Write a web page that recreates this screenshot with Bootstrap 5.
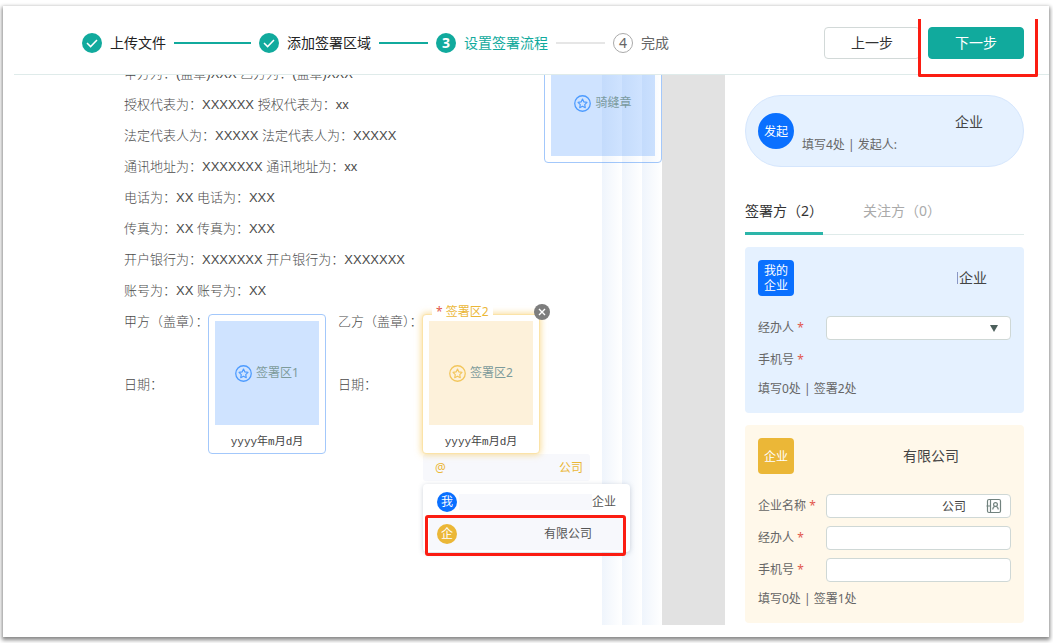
<!DOCTYPE html>
<html lang="zh-CN">
<head>
<meta charset="utf-8">
<meta name="viewport" content="width=device-width, initial-scale=1">
<title>设置签署流程</title>
<link href="https://cdn.jsdelivr.net/npm/bootstrap@5.3.0/dist/css/bootstrap.min.css" rel="stylesheet">
<style>
  :root { --teal: #11aa9d; --blue: #0a70ff; --gold: #ebb737; --mark-red: #fb1d12; --soft: #f7f8fc; }
  body { font: 12px/18px "Noto Sans", "Noto Sans CJK SC", sans-serif; color: #666; background: #fff; }
  .frame { margin: 6px 4px 6px 3px; background: #fff; box-shadow: 0 2px 4px 1px rgba(0,0,0,.48); padding-bottom: 12px; }
  .shell { min-height: 100vh; }
  .bg-own { background: var(--blue); }
  .bg-other { background: var(--gold); }
  /* header */
  .topbar { margin-left: 11px; padding: 5px 25px 0 68px; height: 69px; border-bottom: 1px solid #dfebea; }
  .step { width: 177px; gap: 8px; font-size: 14px; color: #222; white-space: nowrap; }
  .step::after { content: ""; flex: 1; height: 2px; margin-right: 8px; background: var(--teal); }
  .step:last-child::after { display: none; }
  .step.current { color: var(--teal); }
  .step.current::after { background: #e6e6e6; }
  .step.todo { color: #666; }
  .dot { width: 20px; height: 20px; border-radius: 50%; background: var(--teal); color: #fff; font-weight: 700; line-height: 20px; text-align: center; flex: none; }
  .todo .dot { background: #fff; border: 1px solid #aaa; color: #666; font-weight: 400; line-height: 18px; }
  .dot svg { display: block; }
  .act { width: 96px; height: 32px; font-size: 14px; line-height: 18px; border-radius: 4px; padding: 0; }
  .act-prev { background: #fff; border: 1px solid #d2d9d8; color: #333; }
  .act-next, .act-next:hover { background: var(--teal); border: 1px solid var(--teal); color: #fff; }
  .mark-next { position: absolute; inset: -8px -14px -18px -10px; border: 3px solid var(--mark-red); border-top: 0; border-radius: 0 0 2px 2px; pointer-events: none; }
  /* document */
  .viewer { margin-left: 11px; background: #e2e2e2; padding-right: 63px; overflow: hidden; min-width: 0; }
  .sheet { position: relative; background: #fff; overflow: hidden; }
  .contract { margin: -17px 0 0 110px; font: 13px/31px "Liberation Sans", "Noto Sans CJK SC", sans-serif; color: #4a4a4a; font-weight: 300; }
  .contract p { margin: 0; white-space: pre; }
  .party { width: 214px; }
  .folds { position: absolute; inset: 0 0 0 auto; width: 60px; background: repeating-linear-gradient(90deg, rgba(80,140,220,.09) 0, rgba(80,140,220,0) 20px); pointer-events: none; }
  .zone { width: 118px; padding: 6px 6px 0; border: 1px solid #a3c8fb; border-radius: 4px; background: #fff; }
  .zone-face { height: 104px; background: #cfe3ff; color: #7d9b9b; gap: 4px; }
  .zone-date { font: 11px/20px "Liberation Mono", "Noto Sans CJK SC", monospace; color: #444; text-align: center; padding-top: 7px; height: 28px; }
  .zone.gold { border-color: #fbe3a8; box-shadow: 0 0 6px 1px rgba(246,200,90,.6); position: relative; }
  .gold .zone-face { background: #fdf1da; }
  .place { position: absolute; }
  .place-seal { right: 0; top: -32px; padding-bottom: 6px; }
  .place-seal .zone-face { height: 106px; }
  .place-one { left: 194px; top: 239px; }
  .place-two { left: 408px; top: 239px; }
  .zone-tag { position: absolute; left: 9px; top: -12px; background: #fff; color: var(--gold); padding: 0 4px; white-space: nowrap; }
  .need { color: #e2574c; }
  .zone-close { position: absolute; right: -11px; top: -11px; width: 16px; height: 16px; border: 0; padding: 0; border-radius: 50%; background: #7d7d7d; }
  .zone-close svg { display: block; }
  .owner { width: 167px; height: 27px; margin-left: 1px; padding: 0 7px 0 12px; background: var(--soft); color: var(--gold); border-radius: 3px; }
  .menu { width: 207px; margin: 3px 0 0 1px; padding: 2px 6px 0; height: 68px; background: #fff; border-radius: 4px; box-shadow: 0 1px 5px rgba(60,80,110,.25); }
  .menu button { border: 0; width: 100%; height: 32px; padding: 0 8px; background: none; color: #555; position: relative; }
  .menu button.picked { background: var(--soft); padding-right: 32px; }
  .blank { height: 16px; background: var(--soft); margin-left: 2px; }
  .who { width: 20px; height: 20px; border-radius: 50%; line-height: 20px; color: #fff; text-align: center; }
  .mark-pick { position: absolute; inset: -3px -2px -6px -4px; border: 3px solid var(--mark-red); border-radius: 3px; pointer-events: none; }
  /* side panel */
  .side { width: 324px; padding: 20px 25px 0 20px; flex: none; }
  .starter { height: 72px; border: 1px solid #d5e6fd; border-radius: 36px; background: #e5f1ff; padding: 0 12px; gap: 8px; }
  .logo { width: 36px; height: 36px; color: #fff; line-height: 15px; border-radius: 4px; text-align: center; flex: none; }
  .org { font-size: 14px; line-height: 20px; color: #444; }
  .tabs { gap: 40px; margin-top: 30px; border-bottom: 1px solid #dfebea; font-size: 14px; }
  .tabs button { border: 0; background: none; padding: 4px 0 12px; height: 38px; line-height: 20px; color: #aaa; white-space: nowrap; border-bottom: 3px solid transparent; margin-bottom: -1px; }
  .tabs button.active { color: #333; border-bottom-color: #2cb5a9; }
  .signer { background: #e5f1ff; border-radius: 4px; padding: 13px 13px 15px; margin-top: 12px; }
  .signer.outside { background: #fff8ea; }
  .signer .head { margin-bottom: 20px; }
  .line { height: 24px; margin-bottom: 8px; }
  .line label { width: 68px; white-space: nowrap; flex: none; }
  .field { height: 24px; border: 1px solid #cfd8d6; border-radius: 4px; background: #fff; font-size: 12px; line-height: 18px; padding: 0 44px 0 8px; color: #444; flex: 1; min-width: 0; box-shadow: none; text-align: right; }
  .field.pick { appearance: none; background: #fff url("data:image/svg+xml,%3Csvg xmlns='http://www.w3.org/2000/svg' width='8' height='7'%3E%3Cpath d='M0 0h8L4 7z' fill='%234c5f5b'/%3E%3C/svg%3E") no-repeat right 12px center; }
  .book { position: absolute; right: 9px; top: 4px; border: 0; background: none; padding: 0; line-height: 0; }
  .end-24 { margin-right: 24px; } .end-52 { margin-right: 52px; } .end-28 { margin-right: 28px; }
  .caret { border-left: 1px solid #8a97c4; height: 12px; margin-right: 1px; }
</style>
</head>
<body>
<svg class="d-none">
  <symbol id="star" viewBox="0 0 16 16"><circle cx="8" cy="8" r="7.3" fill="none" stroke="currentColor" stroke-width="1.2"/><path d="M8 3.8l1.3 2.7 2.9.4-2.1 2.1.5 2.9L8 10.5l-2.6 1.4.5-2.9-2.1-2.1 2.9-.4z" fill="none" stroke="currentColor" stroke-width="1.1" stroke-linejoin="round"/></symbol>
  <symbol id="tick" viewBox="0 0 20 20"><path d="M5 10l3.6 3.600L15 7" fill="none" stroke="#fff" stroke-width="1.5"/></symbol>
</svg>
<div class="shell d-flex flex-column">
<div class="frame flex-fill d-flex flex-column">
  <header class="topbar d-flex align-items-center">
    <div class="d-flex flex-fill">
      <div class="step d-flex align-items-center"><span class="dot"><svg width="20" height="20"><use href="#tick"/></svg></span>上传文件</div>
      <div class="step d-flex align-items-center"><span class="dot"><svg width="20" height="20"><use href="#tick"/></svg></span>添加签署区域</div>
      <div class="step current d-flex align-items-center"><span class="dot">3</span>设置签署流程</div>
      <div class="step todo d-flex align-items-center"><span class="dot">4</span>完成</div>
    </div>
    <div class="d-flex gap-2">
      <button type="button" class="btn act act-prev">上一步</button>
      <div class="position-relative"><button type="button" class="btn act act-next">下一步</button><span class="mark-next"></span></div>
    </div>
  </header>
  <div class="d-flex flex-fill">
    <main class="viewer flex-fill d-flex">
      <div class="sheet flex-fill">
        <div class="contract">
          <p>甲方为：(盖章)XXX 乙方为：(盖章)XXX</p>
          <p>授权代表为：XXXXXX 授权代表为：xx</p>
          <p>法定代表人为：XXXXX 法定代表人为：XXXXX</p>
          <p>通讯地址为：XXXXXXX 通讯地址为：xx</p>
          <p>电话为：XX 电话为：XXX</p>
          <p>传真为：XX 传真为：XXX</p>
          <p>开户银行为：XXXXXXX 开户银行为：XXXXXXX</p>
          <p>账号为：XX 账号为：XX</p>
          <div class="d-flex"><p class="party">甲方（盖章）：</p><p class="party">乙方（盖章）：</p></div>
          <div class="d-flex pt-4 mt-2"><p class="party">日期：</p><p class="party">日期：</p></div>
        </div>
        <div class="place place-seal zone"><div class="zone-face d-flex align-items-center justify-content-center"><svg width="17" height="17" color="#4d9bff"><use href="#star"/></svg>骑缝章</div></div>
        <div class="folds"></div>
        <div class="place place-one zone">
          <div class="zone-face d-flex align-items-center justify-content-center"><svg width="17" height="17" color="#4d9bff"><use href="#star"/></svg>签署区1</div>
          <div class="zone-date">yyyy年m月d月</div>
        </div>
        <div class="place place-two">
          <div class="zone gold">
            <div class="zone-face d-flex align-items-center justify-content-center"><svg width="17" height="17" color="#f2c65c"><use href="#star"/></svg>签署区2</div>
            <div class="zone-date">yyyy年m月d月</div>
            <span class="zone-tag"><span class="need">*</span> 签署区2</span>
            <button type="button" class="zone-close" aria-label="关闭"><svg width="16" height="16"><path d="M5 5l6 6M11 5l-6 6" stroke="#fff" stroke-width="1.4"/></svg></button>
          </div>
          <div class="owner d-flex align-items-center justify-content-between"><span>@</span><span>公司</span></div>
          <div class="menu">
            <button type="button" class="d-flex align-items-center"><span class="who bg-own">我</span><span class="blank flex-fill"></span>企业</button>
            <button type="button" class="picked d-flex align-items-center justify-content-between"><span class="who bg-other">企</span><span>有限公司</span><span class="mark-pick"></span></button>
          </div>
        </div>
      </div>
    </main>
    <aside class="side">
      <div class="starter d-flex align-items-center">
        <span class="logo bg-own rounded-circle d-flex align-items-center justify-content-center">发起</span>
        <div class="flex-fill d-flex flex-column gap-1 pt-1">
          <span class="org align-self-end end-28">企业</span>
          <span>填写4处 | 发起人:</span>
        </div>
      </div>
      <div class="tabs d-flex" role="tablist">
        <button type="button" role="tab" class="active">签署方（2）</button>
        <button type="button" role="tab">关注方（0）</button>
      </div>
      <section class="signer">
        <div class="head d-flex align-items-center justify-content-between">
          <span class="logo bg-own d-flex align-items-center justify-content-center">我的<br>企业</span>
          <span class="org end-24 d-flex align-items-center"><span class="caret"></span>企业</span>
        </div>
        <div class="line d-flex align-items-center"><label for="agent1">经办人 <span class="need">*</span></label><select id="agent1" class="field pick"><option></option></select></div>
        <div class="line d-flex align-items-center"><span>手机号 <span class="need">*</span></span></div>
        <div>填写0处 | 签署2处</div>
      </section>
      <section class="signer outside">
        <div class="head d-flex align-items-center justify-content-between">
          <span class="logo bg-other d-flex align-items-center justify-content-center">企业</span>
          <span class="org end-52">有限公司</span>
        </div>
        <div class="line d-flex align-items-center position-relative"><label for="corp">企业名称 <span class="need">*</span></label><input id="corp" class="field" type="text" value="公司">
          <button type="button" class="book" aria-label="通讯录"><svg width="16" height="16" fill="none" stroke="#71827e" stroke-width="1.200"><rect x="1.500" y="1.500" width="13" height="13" rx="1.500"/><path d="M4.500 1.500v13M.5 8h4M6.800 11.500c0-2 1-3 2.700-3s2.700 1 2.700 3"/><circle cx="9.500" cy="6.500" r="1.900"/></svg></button></div>
        <div class="line d-flex align-items-center"><label for="agent2">经办人 <span class="need">*</span></label><input id="agent2" class="field" type="text"></div>
        <div class="line d-flex align-items-center"><label for="tel">手机号 <span class="need">*</span></label><input id="tel" class="field" type="tel"></div>
        <div>填写0处 | 签署1处</div>
      </section>
    </aside>
  </div>
</div>
</div>
<script src="https://cdn.jsdelivr.net/npm/bootstrap@5.3.0/dist/js/bootstrap.bundle.min.js"></script>
</body>
</html>
